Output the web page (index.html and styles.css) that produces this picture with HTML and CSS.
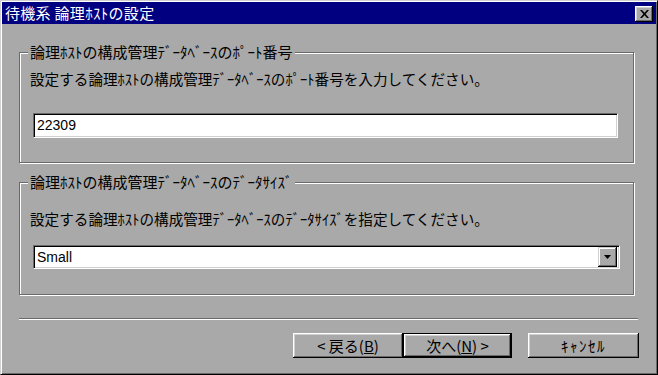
FILE: index.html
```html
<!DOCTYPE html>
<html lang="ja">
<head>
<meta charset="utf-8">
<title>待機系 論理ﾎｽﾄの設定</title>
<link rel="stylesheet" href="styles.css">
</head>
<body>
<div class="window">
  <div class="titlebar">
    <span class="title">待機系 論理ﾎｽﾄの設定</span>
    <span class="close-btn">
      <svg width="9" height="8" viewBox="0 0 9 8"><path d="M0 0h2l2.5 2.8L7 0h2L5.6 4 9 8H7L4.5 5.2 2 8H0l3.4-4z" fill="#000"/></svg>
    </span>
  </div>
  <div class="content">
    <div class="group group-port">
      <div class="group-label">論理ﾎｽﾄの構成管理ﾃﾞｰﾀﾍﾞｰｽのﾎﾟｰﾄ番号</div>
      <div class="desc desc-port">設定する論理ﾎｽﾄの構成管理ﾃﾞｰﾀﾍﾞｰｽのﾎﾟｰﾄ番号を入力してください。</div>
      <div class="textbox">22309</div>
    </div>
    <div class="group group-size">
      <div class="group-label">論理ﾎｽﾄの構成管理ﾃﾞｰﾀﾍﾞｰｽのﾃﾞｰﾀｻｲｽﾞ</div>
      <div class="desc desc-size">設定する論理ﾎｽﾄの構成管理ﾃﾞｰﾀﾍﾞｰｽのﾃﾞｰﾀｻｲｽﾞを指定してください。</div>
      <div class="combo">
        <span class="combo-text">Small</span>
        <span class="combo-btn">
          <svg width="7" height="4" viewBox="0 0 7 4"><path d="M0 0h7L3.5 4z" fill="#000"/></svg>
        </span>
      </div>
    </div>
    <div class="separator"></div>
    <div class="buttons">
      <button class="btn btn-back">&lt;&nbsp;戻る(<u>B</u>)</button>
      <button class="btn btn-next">次へ(<u>N</u>)&nbsp;&gt;</button>
      <button class="btn btn-cancel">ｷｬﾝｾﾙ</button>
    </div>
  </div>
</div>
</body>
</html>
```

FILE: styles.css
```css
* { box-sizing: border-box; }
html, body { margin: 0; padding: 0; }
body {
  width: 658px;
  height: 375px;
  overflow: hidden;
  background: #a9a9a9;
  font-family: "Noto Sans CJK JP", sans-serif;
  font-size: 15px;
  color: #000;
}
.window {
  width: 658px;
  height: 375px;
  background: #a9a9a9;
  border: 1px solid;
  border-color: #d0d0d0 #000 #000 #d0d0d0;
  box-shadow: inset 1px 1px #fff, inset -1px -1px #6a6a6a;
  padding: 1px;
  display: flex;
  flex-direction: column;
}
.titlebar {
  height: 22px;
  background: #000080;
  display: flex;
  align-items: center;
  justify-content: space-between;
  padding: 0 3px 0 3px;
}
.title {
  color: #fff;
  font-size: 15px;
  line-height: 22px;
  white-space: nowrap;
  letter-spacing: 0.3px;
}
.close-btn {
  width: 18px;
  height: 16px;
  background: #a9a9a9;
  box-shadow: inset -1px -1px #000, inset 1px 1px #fff, inset -2px -2px #6a6a6a, inset 2px 2px #d0d0d0;
  display: flex;
  align-items: center;
  justify-content: center;
  margin-top: 1px;
}
.content {
  flex: 1;
  padding: 28px 0 0 17px;
  display: flex;
  flex-direction: column;
}
.group {
  width: 615px;
  border: 1px solid #6a6a6a;
  box-shadow: inset 1px 1px #fff, 1px 1px #fff;
  display: flex;
  flex-direction: column;
  align-items: flex-start;
}
.group-port { height: 111px; }
.group-size { height: 113px; margin-top: 19px; }
.group-label {
  margin-top: -10px;
  margin-left: 8px;
  padding: 0 2px;
  background: #a9a9a9;
  line-height: 18px;
  height: 18px;
  white-space: nowrap;
}
.desc {
  margin-left: 10px;
  font-size: 14.6px;
  line-height: 18px;
  height: 18px;
  white-space: nowrap;
}
.desc-port { margin-top: 9px; }
.desc-size { margin-top: 19px; }
.textbox, .combo {
  margin-left: 13px;
  background: #fff;
  border: 1px solid;
  border-color: #6a6a6a #fff #fff #6a6a6a;
  box-shadow: inset 1px 1px #000, inset -1px -1px #d0d0d0;
  font-family: "Liberation Sans", Arial, sans-serif;
  font-size: 14px;
}
.textbox {
  margin-top: 25px;
  width: 585px;
  height: 25px;
  padding-left: 3px;
  line-height: 23px;
}
.combo {
  margin-top: 17px;
  width: 587px;
  height: 24px;
  padding: 1px 2px 1px 1px;
  display: flex;
  align-items: center;
  justify-content: space-between;
}
.combo-text {
  padding-left: 2px;
  line-height: 20px;
}
.combo-btn {
  width: 19px;
  height: 20px;
  background: #a9a9a9;
  box-shadow: inset -1px -1px #000, inset 1px 1px #d0d0d0, inset -2px -2px #6a6a6a, inset 2px 2px #fff;
  display: flex;
  align-items: center;
  justify-content: center;
}
.separator {
  margin-top: 23px;
  width: 619px;
  height: 2px;
  border-top: 1px solid #6a6a6a;
  border-bottom: 1px solid #fff;
}
.buttons {
  margin-top: 13px;
  display: flex;
  justify-content: flex-end;
  padding-right: 17px;
}
.btn {
  height: 25px;
  margin: 0;
  padding: 0;
  border: none;
  background: #a9a9a9;
  font-family: "Noto Sans CJK JP", sans-serif;
  font-size: 15px;
  line-height: 23px;
  color: #000;
  box-shadow: inset -1px -1px #000, inset 1px 1px #fff, inset -2px -2px #6a6a6a, inset 2px 2px #d0d0d0;
}
.btn u { text-underline-offset: 1px; }
.btn-back { width: 110px; }
.btn-next {
  width: 109px;
  margin-right: 16px;
  border: 1px solid #000;
}
.btn-cancel { width: 111px; letter-spacing: 1.5px; }
```
